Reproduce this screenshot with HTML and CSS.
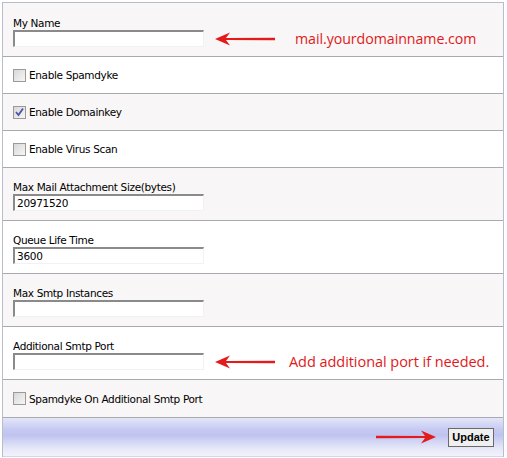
FILE: index.html
```html
<!DOCTYPE html>
<html>
<head>
<meta charset="utf-8">
<link rel="stylesheet" href="styles.css">
</head>
<body>
<div class="panel">
  <div class="row alt field first">
    <div class="label">My Name</div>
    <div class="line">
      <span class="input"></span>
      <svg class="arrow-left" width="62" height="16" viewBox="0 0 62 16"><path d="M1 8 L16 1.5 L12 7 L61 6.8 L61 9.2 L12 9 L16 14.5 Z" fill="#e41b1b"/></svg>
      <span class="note">mail.yourdomainname.com</span>
    </div>
  </div>
  <div class="row check">
    <span class="box"></span><span class="ctext">Enable Spamdyke</span>
  </div>
  <div class="row alt check">
    <span class="box checked"><svg width="11" height="11" viewBox="0 0 11 11"><path d="M2 5 L4.5 8 L9 1.5" fill="none" stroke="#4a55a8" stroke-width="1.8"/></svg></span><span class="ctext">Enable Domainkey</span>
  </div>
  <div class="row check">
    <span class="box"></span><span class="ctext">Enable Virus Scan</span>
  </div>
  <div class="row alt field">
    <div class="label">Max Mail Attachment Size(bytes)</div>
    <div class="line"><span class="input">20971520</span></div>
  </div>
  <div class="row field">
    <div class="label">Queue Life Time</div>
    <div class="line"><span class="input">3600</span></div>
  </div>
  <div class="row alt field">
    <div class="label">Max Smtp Instances</div>
    <div class="line"><span class="input"></span></div>
  </div>
  <div class="row field">
    <div class="label">Additional Smtp Port</div>
    <div class="line">
      <span class="input"></span>
      <svg class="arrow-left" width="62" height="16" viewBox="0 0 62 16"><path d="M1 8 L16 1.5 L12 7 L61 6.8 L61 9.2 L12 9 L16 14.5 Z" fill="#e41b1b"/></svg>
      <span class="note note2">Add additional port if needed.</span>
    </div>
  </div>
  <div class="row alt check last">
    <span class="box"></span><span class="ctext">Spamdyke On Additional Smtp Port</span>
  </div>
  <div class="footer">
    <svg class="arrow-right" width="62" height="16" viewBox="0 0 62 16"><path d="M61 8 L46 1.5 L50 7 L1 6.8 L1 9.2 L50 9 L46 14.5 Z" fill="#e41b1b"/></svg>
    <button class="btn">Update</button>
  </div>
</div>
</body>
</html>
```

FILE: styles.css
```css
html, body {
  margin: 0;
  padding: 0;
  background: #ffffff;
}
body {
  padding: 2px 0 0 2px;
  font-family: Tahoma, "DejaVu Sans", Verdana, sans-serif;
  font-size: 11px;
  color: #000;
}
.panel {
  width: 500px;
  border: 1px solid #b9bccb;
  border-bottom: none;
}
.row {
  border-bottom: 1px solid #a9a9b2;
  padding: 0 10px;
  background: #ffffff;
}
.row.alt {
  background: #f8f6f6;
}
.field {
  height: 53px;
  box-sizing: border-box;
  padding-top: 13px;
}
.field.first {
  height: 54px;
  padding-top: 14px;
}
.label {
  height: 13px;
  line-height: 13px;
  font-family: "DejaVu Sans", sans-serif;
  font-size: 10.5px;
  letter-spacing: -0.35px;
}
.line {
  display: flex;
  align-items: center;
  height: 17px;
}
.input {
  display: block;
  width: 186px;
  height: 14px;
  border-top: 2px solid #8a8a8a;
  border-left: 2px solid #8a8a8a;
  border-right: 1px solid #f2f2f2;
  border-bottom: 1px solid #f2f2f2;
  background: #fff;
  font-family: "DejaVu Sans", sans-serif;
  font-size: 10.5px;
  letter-spacing: -0.3px;
  line-height: 14px;
  padding-left: 2px;
  flex: none;
}
.arrow-left {
  margin-left: 10px;
  flex: none;
}
.note {
  margin-left: 19px;
  color: #e01a1a;
  font-family: "Open Sans", sans-serif;
  font-size: 14.2px;
  font-weight: 500;
  letter-spacing: -0.05px;
  line-height: 17px;
  white-space: nowrap;
}
.note2 {
  margin-left: 13px;
  font-size: 14.5px;
}
.check {
  height: 37px;
  box-sizing: border-box;
  display: flex;
  align-items: center;
}
.check.last {
  height: 38px;
}
.box {
  width: 11px;
  height: 11px;
  border: 1px solid #9a9a9a;
  background: linear-gradient(135deg, #d8d8d8, #f6f6f6);
  display: inline-flex;
  align-items: center;
  justify-content: center;
  flex: none;
}
.box svg {
  display: block;
}
.ctext {
  margin-left: 3px;
  font-family: "DejaVu Sans", sans-serif;
  font-size: 10.5px;
  letter-spacing: -0.35px;
}
.footer {
  height: 38px;
  display: flex;
  align-items: center;
  justify-content: flex-end;
  padding-right: 9px;
  background: linear-gradient(to bottom, #e4e6f8 0%, #c6caf2 30%, #bfc3f0 45%, #e6e8f8 80%, #f2f3fb 100%);
  border-bottom: 1px solid #d4d6ec;
}
.arrow-right {
  margin-right: 11px;
}
.btn {
  width: 46px;
  height: 19px;
  padding: 0;
  border: 1px solid #6a6a6a;
  background: #efefef;
  font-family: "Liberation Sans", Arial, sans-serif;
  font-weight: bold;
  font-size: 11px;
  color: #000;
}
```
